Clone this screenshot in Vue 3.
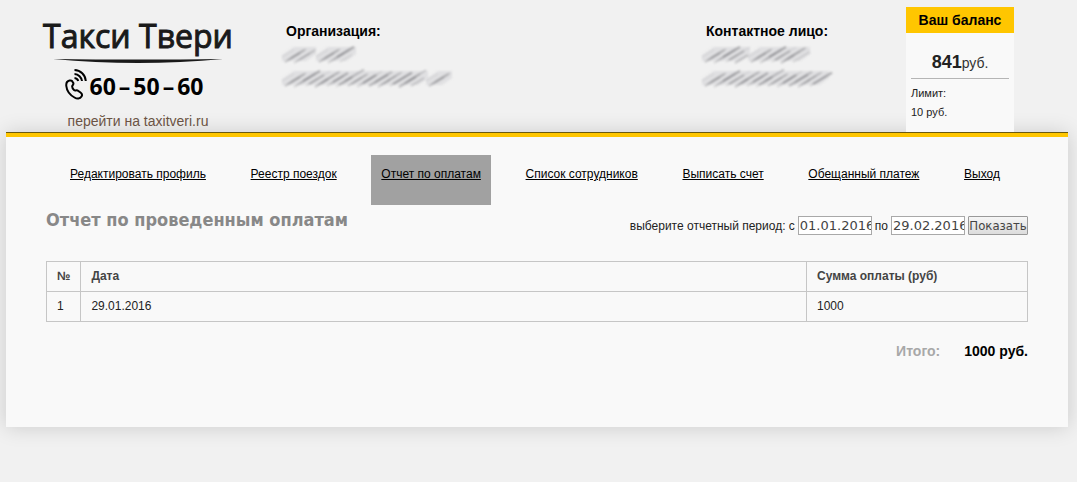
<template>
  <div class="page">
    <header class="header">
      <div class="brand">
        <div class="logo">Такси Твери</div>
        <svg class="swoosh" viewBox="0 0 170 4" preserveAspectRatio="none"><path d="M0 0 Q85 1 170 0 Q85 8 0 0Z" fill="#1a1a1a" /></svg>
        <div class="phone">
          <svg width="22" height="31" viewBox="0 0 22 31" fill="none" stroke="#000" stroke-width="2">
            <path d="M4.5 11.5C2 12 1 14 1.3 17C1.8 22 5 26 9.5 28.5C12 30 15 30 16.5 27.5C17.5 26 16.8 24.5 15.5 23.5L12.5 21.5C11 21 10 22 9 21C7.5 19.7 7 18.3 7.2 17C7.4 16.2 8.7 15.8 8.4 14.2L7.2 12.2C6.4 11.2 5.6 11.3 4.5 11.5Z" />
            <path d="M9.5 1C15.5 1.2 20.4 6 20.8 12M9.5 5C13.4 5.2 16.6 8.2 17 12M9.5 9C11.5 9.2 12.8 10.3 13.2 12" />
          </svg>
          <span>60</span><span>–</span><span>50</span><span>–</span><span>60</span>
        </div>
        <a class="site" href="#">перейти на taxitveri.ru</a>
      </div>
      <div v-for="c in contacts" :key="c.title" class="contact">
        <h4>{{ c.title }}</h4>
        <svg width="180" height="48" viewBox="0 0 180 48">
          <g v-for="(r, i) in c.rows" :key="i" class="smear">
            <path class="haze" :d="haze(r)" />
            <path v-for="(s, j) in strokes(r)" :key="j" :d="s.d" :stroke-width="s.w" :opacity="s.o" />
          </g>
        </svg>
      </div>
      <div class="balance">
        <h3>Ваш баланс</h3>
        <div class="balance-body">
          <div class="sum"><b>841</b>руб.</div>
          <div>Лимит:</div>
          <div>10 руб.</div>
        </div>
      </div>
    </header>

    <main class="panel">
      <nav class="menu">
        <a v-for="m in menu" :key="m" href="#" :class="{ active: m === current }" @click.prevent="current = m">{{ m }}</a>
      </nav>
      <div class="content">
        <div class="top">
          <h1>Отчет по проведенным оплатам</h1>
          <form class="period" @submit.prevent>
            <label for="from">выберите отчетный период: с</label>
            <input id="from" v-model="from" type="text">
            <label for="to">по</label>
            <input id="to" v-model="to" type="text">
            <button type="submit">Показать</button>
          </form>
        </div>
        <table>
          <thead>
            <tr><th class="num">№</th><th>Дата</th><th class="amount">Сумма оплаты (руб)</th></tr>
          </thead>
          <tbody>
            <tr v-for="(p, i) in payments" :key="i"><td>{{ i + 1 }}</td><td>{{ p.date }}</td><td>{{ p.sum }}</td></tr>
          </tbody>
        </table>
        <div class="total"><span>Итого:</span><b>{{ total }} руб.</b></div>
      </div>
    </main>
  </div>
</template>

<script setup>
import { ref, computed } from 'vue'

const menu = ['Редактировать профиль', 'Реестр поездок', 'Отчет по оплатам', 'Список сотрудников', 'Выписать счет', 'Обещанный платеж', 'Выход']
const current = ref('Отчет по оплатам')
const from = ref('01.01.2016')
const to = ref('29.02.2016')
const payments = ref([{ date: '29.01.2016', sum: 1000 }])
const total = computed(() => payments.value.reduce((a, p) => a + p.sum, 0))

// hidden personal data: y of the row and the words as [start, end]
const contacts = [
  { title: 'Организация:', rows: [{ y: 10, words: [[2, 38], [36, 78]] }, { y: 34, words: [[2, 150], [146, 174]] }] },
  { title: 'Контактное лицо:', rows: [{ y: 10, words: [[2, 52], [48, 112]] }, { y: 34, words: [[2, 131]] }] }
]
function haze(r) {
  return r.words.map(([a, b]) => `M${a} ${r.y + 7}V${r.y + 1}L${a + 12} ${r.y - 7}H${b - 2}V${r.y}L${b - 12} ${r.y + 7}Z`).join('')
}
function strokes(r) {
  const out = []
  for (const [a, b] of r.words) {
    for (let x = a, k = 0; x < b - 16; x += 3, k++) {
      const dy = (k * 5) % 7
      const len = 12 + (k * 3) % 8
      out.push({ d: `M${x} ${r.y + 3 + dy}l${len} ${-len * 0.6}`, w: 1 + (k % 2), o: 0.2 + (k * 7 % 5) / 10 })
    }
  }
  return out
}
</script>

<style>
body { margin: 0; background: #f1f1f1; }
</style>

<style scoped>
.page { font: 12px/20px "Liberation Sans", Arial, sans-serif; color: #222; padding: 7px 9px 54px 6px; }
h1, h3, h4 { margin: 0; }
.header { display: grid; grid-template-columns: 270px 420fr 210fr 108px; padding-right: 54px; height: 125px; }
.brand { width: 264px; display: flex; flex-direction: column; align-items: center; }
.logo { font: 32px/40px "Open Sans", "Noto Sans", sans-serif; color: #1a1a1a; -webkit-text-stroke: 1px #1a1a1a; margin-top: 9px; }
.swoosh { width: 170px; height: 4px; margin-top: 3px; }
.phone { display: flex; gap: 3px; margin-top: 6px; margin-right: 8px; height: 31px; font: bold 23px/35px "Noto Sans", sans-serif; color: #000; }
.site { font-size: 14px; line-height: 20px; margin-top: 11px; color: #6b5344; text-decoration: none; }
.contact { padding: 14px 0 0 10px; }
.contact h4 { font-size: 14px; line-height: 20px; color: #000; }
.contact svg { display: block; margin-left: -6px; margin-top: 3px; }
.smear { fill: none; stroke: #77777c; filter: blur(1px); }
.smear .haze { fill: #e0e0e2; stroke: none; }
.balance { background: #f9f9f9; }
.balance h3 { background: #ffc600; color: #000; font-size: 14px; line-height: 26px; text-align: center; }
.balance-body { padding: 14px 5px 0; font-size: 11px; line-height: 19px; }
.sum { font-size: 14px; line-height: 30px; text-align: center; border-bottom: 1px solid #b5b5b5; margin-bottom: 5px; color: #333; }
.sum b { font-size: 18px; color: #222; }
.panel { background: #f9f9f9; border-top: 4px solid #ffc600; box-shadow: 0 -1px 0 #6b5a10, 0 0 20px rgba(0, 0, 0, .16); margin-top: 1px; padding: 18px 40px 66px; }
.menu { display: flex; flex-wrap: wrap; justify-content: space-between; padding: 0 18px 0 14px; }
.menu a { height: 31px; padding: 9px 10px 10px; color: #000; }
.menu .active { background: #a1a1a1; }
.top { display: flex; justify-content: space-between; height: 56px; }
h1 { font: bold 18px/30px "DejaVu Sans Condensed", "DejaVu Sans", Tahoma, sans-serif; color: #888; }
.period { display: flex; gap: 3px; align-items: flex-start; height: 20px; margin-top: 11px; }
.period input { width: 74px; height: 19px; box-sizing: border-box; padding: 1px 0 1px 1px; border: 1px solid #a9a9a9; background: #fff; color: #444; font: 13px "DejaVu Sans", Verdana, sans-serif; }
.period button { width: 60px; height: 19px; padding: 0; border: 1px solid #999; border-radius: 1px; background: linear-gradient(#f6f6f6, #dcdcdc); color: #444; font: 13px/16px "DejaVu Sans Condensed", Tahoma, sans-serif; }
table { width: 100%; border-collapse: collapse; }
th, td { border: 1px solid #c6c6c6; padding: 4px 10px 5px; text-align: left; line-height: 20px; }
th { color: #444; }
.num { width: 13px; }
.amount { width: 200px; }
.total { display: flex; justify-content: flex-end; gap: 24px; margin-top: 19px; font-size: 14px; font-weight: bold; color: #000; }
.total span { color: #a8a8a8; }
</style>
